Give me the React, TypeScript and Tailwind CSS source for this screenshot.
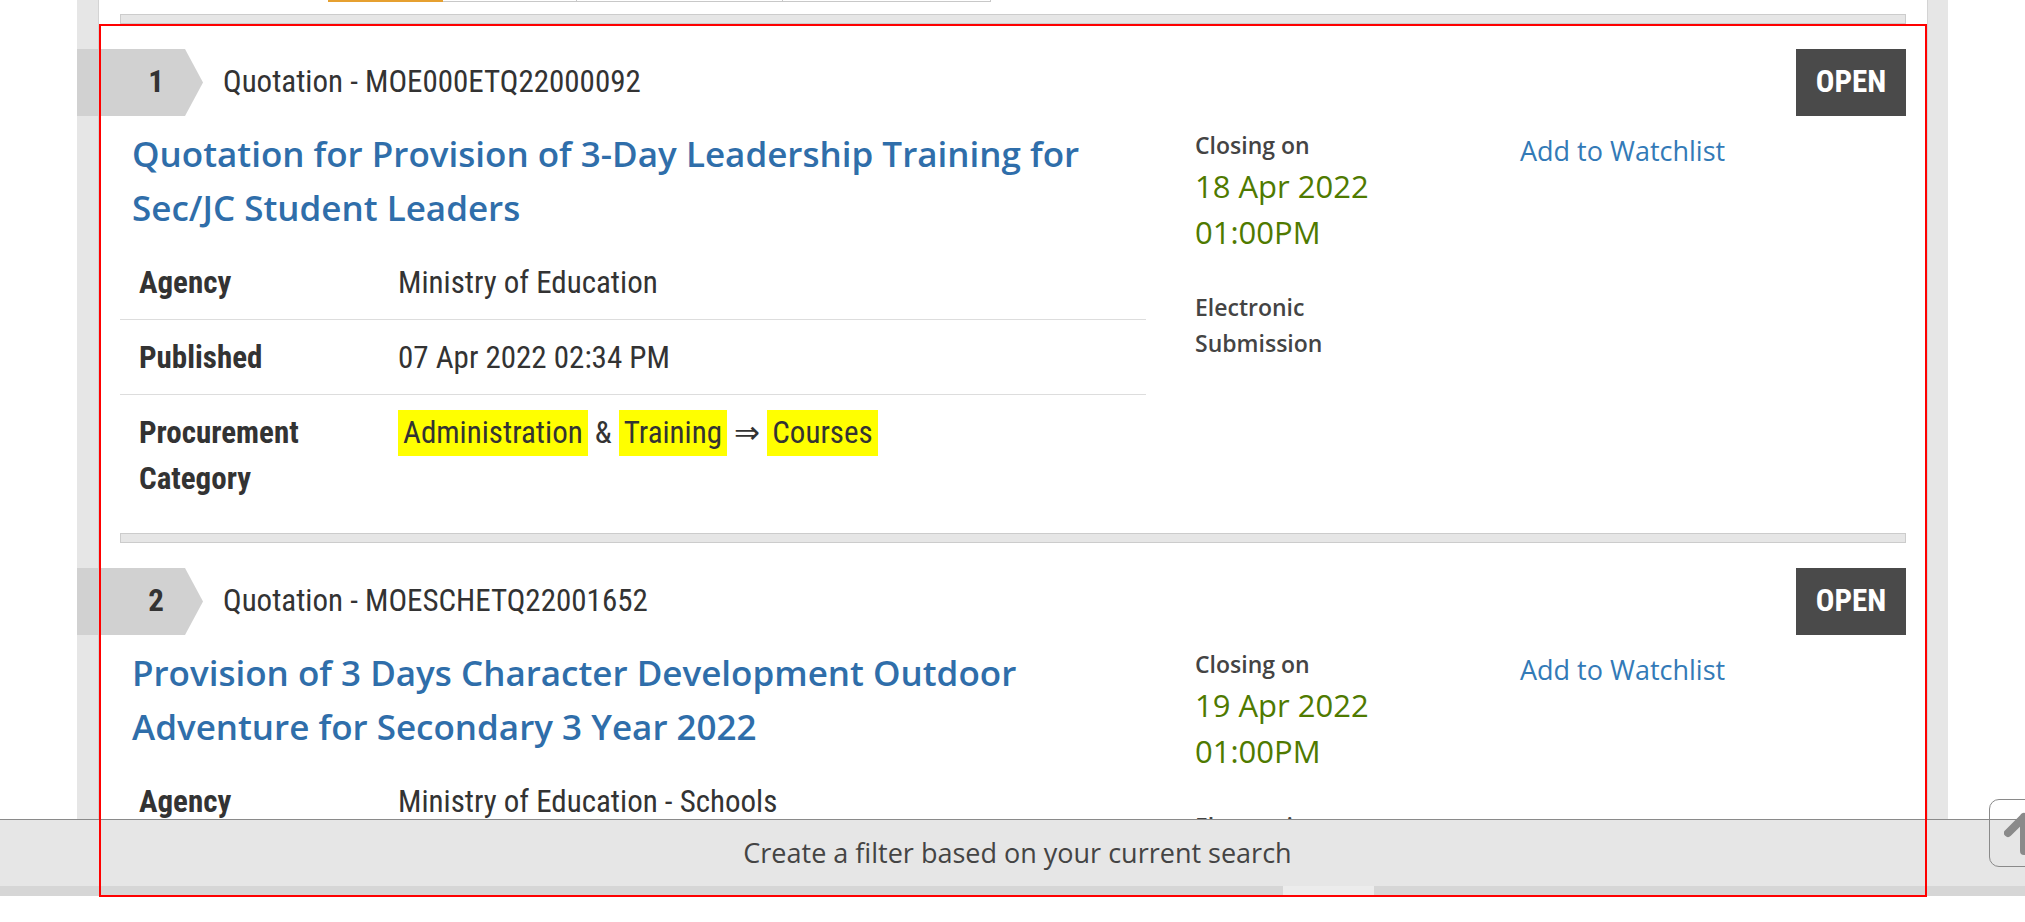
const cond = "font-['Roboto_Condensed','Roboto',sans-serif] [font-stretch:87.5%]";
const sans = "font-['Open_Sans','Noto_Sans',sans-serif]";

type Tender = {
  no: number;
  code: string;
  title: string;
  agency: string;
  published: string;
  closeDate: string;
  closeTime: string;
};

const tenders: Tender[] = [
  {
    no: 1,
    code: "MOE000ETQ22000092",
    title: "Quotation for Provision of 3-Day Leadership Training for Sec/JC Student Leaders",
    agency: "Ministry of Education",
    published: "07 Apr 2022 02:34 PM",
    closeDate: "18 Apr 2022",
    closeTime: "01:00PM",
  },
  {
    no: 2,
    code: "MOESCHETQ22001652",
    title: "Provision of 3 Days Character Development Outdoor Adventure for Secondary 3 Year 2022",
    agency: "Ministry of Education - Schools",
    published: "07 Apr 2022 02:10 PM",
    closeDate: "19 Apr 2022",
    closeTime: "01:00PM",
  },
];

const Separator = () => (
  <div className="mx-[21px] h-[10px] bg-[#e6e6e6] border border-[#cccccc]" />
);

const Mark = ({ children }: { children: string }) => (
  <span className="inline-block px-[5px] bg-[#ffff00] leading-[46px]">{children}</span>
);

const TenderCard = ({ t }: { t: Tender }) => (
  <div className="px-[21px] pt-[25px] pb-[18px]">
    {/* header: number chevron, reference, status */}
    <div className="flex items-center justify-between">
      <div className="flex items-center">
        <div className="ml-[-43px] w-[126px] h-[67px] bg-[#d1d1d1] flex items-center [clip-path:polygon(0_0,108px_0,126px_50%,108px_100%,0_100%)]">
          <span className={`ml-[64px] w-[30px] text-center text-[31px] font-bold text-[#333333] ${cond}`}>{t.no}</span>
        </div>
        <span className={`ml-[20px] text-[31px] text-[#333333] ${cond}`}>Quotation - {t.code}</span>
      </div>
      <div className={`w-[110px] h-[67px] bg-[#4a4a4a] flex items-center justify-center text-white text-[31px] font-bold ${cond}`}>
        OPEN
      </div>
    </div>

    <div className="flex mt-[11px]">
      <div className="w-[1026px]">
        <a href="#" className={`block pl-[12px] text-[35px] font-semibold leading-[54px] text-[#2f6eaa] ${sans}`}>
          {t.title}
        </a>
        <div className={`mt-[10px] text-[31px] text-[#333333] ${cond}`}>
          <div className="grid grid-cols-[278px_1fr] pt-[15px] pb-[13px] leading-[46px] border-b border-[#dddddd]">
            <div className="pl-[19px] font-bold">Agency</div>
            <div>{t.agency}</div>
          </div>
          <div className="grid grid-cols-[278px_1fr] pt-[15px] pb-[13px] leading-[46px] border-b border-[#dddddd]">
            <div className="pl-[19px] font-bold">Published</div>
            <div>{t.published}</div>
          </div>
          <div className="grid grid-cols-[278px_1fr] pt-[15px] pb-[13px] leading-[46px]">
            <div className="pl-[19px] font-bold">
              Procurement
              <br />
              Category
            </div>
            <div>
              <Mark>Administration</Mark> &amp; <Mark>Training</Mark> ⇒ <Mark>Courses</Mark>
            </div>
          </div>
        </div>
      </div>

      <div className={`ml-[49px] w-[325px] ${sans}`}>
        <div className="text-[23px] font-semibold leading-[36px] text-[#444444]">Closing on</div>
        <div className="text-[31px] leading-[46px] text-[#4f7a00]">{t.closeDate}</div>
        <div className="text-[31px] leading-[46px] text-[#4f7a00]">{t.closeTime}</div>
        <div className="mt-[34px] text-[23px] font-semibold leading-[36px] text-[#444444]">
          Electronic
          <br />
          Submission
        </div>
      </div>

      <div className={`flex-1 pt-[6px] ${sans}`}>
        <a href="#" className="text-[27px] leading-[36px] text-[#337ab7]">Add to Watchlist</a>
      </div>
    </div>
  </div>
);

export default function App() {
  return (
    <div className="relative w-[2025px] h-[922px] overflow-hidden bg-white">
      <div className="flex h-[819px] overflow-hidden">
        <div className="w-[77px] shrink-0" />
        <div className="w-[22px] shrink-0 bg-[#e6e6e6] border-r border-[#d4d4d4]" />
        <div className="w-[1828px] shrink-0">
          {/* tab strip bottoms */}
          <div className="flex h-[3px] ml-[229px]">
            <div className="w-[115px] h-[2px] bg-[#e6a030]" />
            <div className="w-[134px] h-[2px] border-b border-r border-[#c8c8c8]" />
            <div className="w-[206px] h-[2px] border-b border-r border-[#c8c8c8]" />
            <div className="w-[208px] h-[2px] border-b border-r border-[#c8c8c8]" />
          </div>
          <div className="mt-[11px]">
            <Separator />
          </div>
          {tenders.map((t, i) => (
            <div key={t.no}>
              {i > 0 && <Separator />}
              <TenderCard t={t} />
            </div>
          ))}
        </div>
        <div className="w-[21px] shrink-0 bg-[#e6e6e6] border-l border-[#d4d4d4]" />
        <div className="flex-1" />
      </div>

      {/* sticky filter bar */}
      <div className={`h-[67px] bg-[#e6e6e6] border-t border-[#8a8a8a] flex items-center justify-center pl-[10px] text-[27px] text-[#444444] ${sans}`}>
        Create a filter based on your current search
      </div>
      <div className="h-[10px] bg-[#d6d6d6] flex">
        <div className="ml-[1283px] w-[91px] bg-[#ececec]" />
      </div>

      {/* back to top */}
      <div className="absolute left-[1989px] top-[799px] w-[70px] h-[68px] rounded-[10px] border border-[#8a8a8a] flex items-center justify-center">
        <svg width="40" height="44" viewBox="0 0 40 44" fill="none" stroke="#8a8a8a" strokeWidth="8" strokeLinecap="round" strokeLinejoin="round">
          <path d="M20 40V6M4 22L20 6l16 16" />
        </svg>
      </div>

      {/* highlight box */}
      <div className="absolute left-[99px] top-[24px] w-[1828px] h-[873px] border-2 border-[#ff0000] pointer-events-none" />
    </div>
  );
}
